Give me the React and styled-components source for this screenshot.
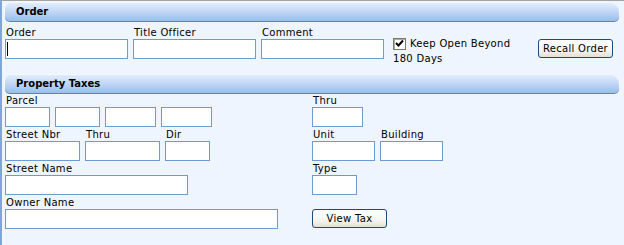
import styled, { createGlobalStyle } from 'styled-components'

const GlobalStyle = createGlobalStyle`
    html, body {
        margin: 0;
        padding: 0;
        background: #eef5fe;
    }
    body {
        font-family: "DejaVu Sans", Verdana, sans-serif;
        font-size: 10px;
        letter-spacing: 0.3px;
        color: #000;
    }
`

export default function App(){
    return(
        <S.Page>
            <GlobalStyle/>
            <S.SectionHeader>Order</S.SectionHeader>
            <S.OrderRow>
                <S.Field>
                    <S.Label>Order</S.Label>
                    <S.InputWrap>
                        <S.Input $w={123}/>
                        <S.Caret/>
                    </S.InputWrap>
                </S.Field>
                <S.Field>
                    <S.Label>Title Officer</S.Label>
                    <S.Input $w={123}/>
                </S.Field>
                <S.Field>
                    <S.Label>Comment</S.Label>
                    <S.Input $w={123}/>
                </S.Field>
                <S.CheckBlock>
                    <S.CheckBox>
                        <svg width="9" height="9" viewBox="0 0 9 9">
                            <path d="M1 4 L3.5 6.5 L8 1.5" stroke="#000" strokeWidth="2" fill="none"/>
                        </svg>
                    </S.CheckBox>
                    Keep Open Beyond 180 Days
                </S.CheckBlock>
                <S.Button $w={75} $push>Recall Order</S.Button>
            </S.OrderRow>

            <S.SectionHeader>Property Taxes</S.SectionHeader>
            <S.TaxGrid>
                <S.Row>
                    <S.Field>
                        <S.Label>Parcel</S.Label>
                        <S.Inputs>
                            <S.Input $w={45}/>
                            <S.Input $w={45}/>
                            <S.Input $w={51}/>
                            <S.Input $w={51}/>
                        </S.Inputs>
                    </S.Field>
                </S.Row>
                <S.Row>
                    <S.Field>
                        <S.Label>Thru</S.Label>
                        <S.Input $w={51}/>
                    </S.Field>
                </S.Row>

                <S.Row>
                    <S.Field>
                        <S.Label>Street Nbr</S.Label>
                        <S.Input $w={75}/>
                    </S.Field>
                    <S.Field>
                        <S.Label>Thru</S.Label>
                        <S.Input $w={75}/>
                    </S.Field>
                    <S.Field>
                        <S.Label>Dir</S.Label>
                        <S.Input $w={45}/>
                    </S.Field>
                </S.Row>
                <S.Row>
                    <S.Field>
                        <S.Label>Unit</S.Label>
                        <S.Input $w={63}/>
                    </S.Field>
                    <S.Field>
                        <S.Label>Building</S.Label>
                        <S.Input $w={63}/>
                    </S.Field>
                </S.Row>

                <S.Row>
                    <S.Field>
                        <S.Label>Street Name</S.Label>
                        <S.Input $w={183}/>
                    </S.Field>
                </S.Row>
                <S.Row>
                    <S.Field>
                        <S.Label>Type</S.Label>
                        <S.Input $w={45}/>
                    </S.Field>
                </S.Row>

                <S.Row>
                    <S.Field>
                        <S.Label>Owner Name</S.Label>
                        <S.Input $w={273}/>
                    </S.Field>
                </S.Row>
                <S.Row>
                    <S.ButtonCell>
                        <S.Button $w={75}>View Tax</S.Button>
                    </S.ButtonCell>
                </S.Row>
            </S.TaxGrid>
        </S.Page>
    )
}

const S = {
    Page: styled.div`
        min-height: 245px;
        box-sizing: border-box;
        background: #eef5fe;
        border-top: 1px solid #a3a3a3;
        border-left: 2px solid #7ea6da;
        padding: 1px 5px 0 3px;
    `,

    SectionHeader: styled.div`
        height: 19px;
        line-height: 19px;
        padding-left: 11px;
        font-weight: 700;
        font-size: 10px;
        letter-spacing: 0;
        color: #000;
        background: linear-gradient(to bottom, #e4effd 0%, #c6daf6 45%, #9dbdec 100%);
        border-bottom: 1px solid #5482c4;
        border-radius: 6px 9px 5px 5px;
        box-shadow: inset 0 1px 0 #f4f8fe;
    `,

    OrderRow: styled.div`
        display: flex;
        align-items: flex-start;
        gap: 5px;
        height: 32px;
        margin-top: 5px;
        margin-bottom: 15px;
    `,

    TaxGrid: styled.div`
        display: grid;
        grid-template-columns: 307px 1fr;
        row-gap: 2px;
        margin-top: 1px;
    `,

    Row: styled.div`
        display: flex;
        gap: 5px;
    `,

    Field: styled.div`
        display: flex;
        flex-direction: column;
    `,

    Label: styled.label`
        display: block;
        height: 12px;
        line-height: 12px;
        padding-left: 1px;
        white-space: nowrap;
    `,

    Inputs: styled.div`
        display: flex;
        gap: 5px;
    `,

    InputWrap: styled.div`
        position: relative;
    `,

    Input: styled.input`
        display: block;
        box-sizing: border-box;
        width: ${props => props.$w}px;
        height: 20px;
        margin: 0;
        padding: 0 2px;
        border: 1px solid #6b9bd2;
        border-radius: 0;
        background: #fff;
        font-family: inherit;
        font-size: 11px;
        outline: none;
    `,

    Caret: styled.span`
        position: absolute;
        left: 2px;
        top: 3px;
        width: 1px;
        height: 14px;
        background: #000;
    `,

    CheckBlock: styled.div`
        width: 132px;
        margin-top: 9px;
        padding-left: 4px;
        line-height: 15px;
    `,

    CheckBox: styled.span`
        display: inline-flex;
        align-items: center;
        justify-content: center;
        box-sizing: border-box;
        width: 13px;
        height: 12px;
        margin-right: 4px;
        vertical-align: -1px;
        background: #fff;
        border: 1px solid #7a7a6c;
        box-shadow: inset 1px 1px 0 #b0ada0;
    `,

    ButtonCell: styled.div`
        padding-top: 12px;
    `,

    Button: styled.button`
        box-sizing: border-box;
        width: ${props => props.$w}px;
        height: 19px;
        margin: ${props => props.$push ? '12px 6px 0 auto' : '0'};
        padding: 0;
        font-family: inherit;
        font-size: 10px;
        letter-spacing: 0.3px;
        color: #000;
        border: 1px solid #1f4a7e;
        border-radius: 3px;
        background: linear-gradient(to bottom, #ffffff 0%, #f6f5f0 60%, #e3e0d3 100%);
        cursor: pointer;
    `,
}
